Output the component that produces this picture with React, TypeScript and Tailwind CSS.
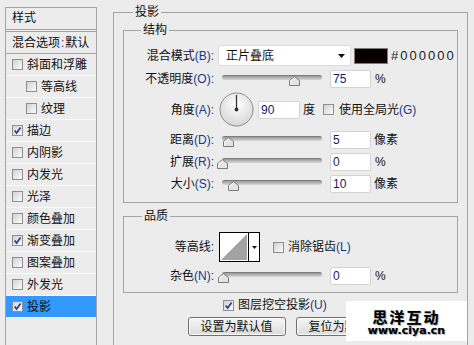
import React from "react";

function Check({ checked }: { checked?: boolean }) {
  return (
    <span className="relative inline-block w-[11px] h-[11px] shrink-0 border border-[#8e8f8f] bg-gradient-to-br from-[#d2d2d2] to-[#fcfcfc]">
      {checked && (
        <svg className="absolute left-0 top-0" width="9" height="9" viewBox="0 0 9 9">
          <path d="M1.6 4.4 L3.6 7 L7.6 1.4" stroke="#2b3f95" strokeWidth="1.7" fill="none" />
        </svg>
      )}
    </span>
  );
}

function Key({ k }: { k: string }) {
  return <span className="text-[#17388a]">({k}):</span>;
}

function Label({ cn, k }: { cn: string; k?: string }) {
  return (
    <div className="w-[90px] shrink-0 text-right whitespace-nowrap">
      {cn}
      {k ? <Key k={k} /> : <span>:</span>}
    </div>
  );
}

function Slider({ pos }: { pos: number }) {
  return (
    <div className="relative ml-[3px] w-[110px] h-[18px] shrink-0">
      <div className="absolute left-[5px] right-[5px] top-[5px] h-[5px] rounded-full border-t border-[#7c7c7c] bg-gradient-to-b from-[#9a9a9a] to-[#d8d8d8]" />
      <svg className="absolute top-[6px]" style={{ left: pos }} width="11" height="10" viewBox="0 0 11 10">
        <path d="M0.5 9.5 V4.5 L5.5 0.6 L10.5 4.5 V9.5 Z" fill="#e4e4e4" stroke="#7a7a7a" />
        <path d="M1.5 8.5 V5 L5.5 1.9" fill="none" stroke="#ffffff" />
      </svg>
    </div>
  );
}

function Input({ v, w = "w-[41px]" }: { v: string; w?: string }) {
  return (
    <div className={`ml-[3px] ${w} h-[18px] shrink-0 bg-white border border-[#d3d3d3] rounded-[2px] pl-[2px] flex items-center text-[#121c6a] leading-none`}>
      {v}
    </div>
  );
}

const items: { t: string; lvl: number; c?: boolean; sel?: boolean }[] = [
  { t: "斜面和浮雕", lvl: 0 },
  { t: "等高线", lvl: 1 },
  { t: "纹理", lvl: 1 },
  { t: "描边", lvl: 0, c: true },
  { t: "内阴影", lvl: 0 },
  { t: "内发光", lvl: 0 },
  { t: "光泽", lvl: 0 },
  { t: "颜色叠加", lvl: 0 },
  { t: "渐变叠加", lvl: 0, c: true },
  { t: "图案叠加", lvl: 0 },
  { t: "外发光", lvl: 0 },
  { t: "投影", lvl: 0, c: true, sel: true },
];

export default function App() {
  return (
    <div className="relative w-[474px] h-[345px] overflow-hidden bg-[#ececec] text-[12px] text-[#111] font-['Liberation_Sans','Noto_Sans_CJK_SC',sans-serif] flex items-start">
      {/* left list */}
      <div className="ml-[5px] mt-[7px] w-[92px] h-[360px] shrink-0 border border-[#a3a3a3] flex flex-col">
        <div className="h-[22px] flex items-center pl-[6px] pb-[2px] border-b border-[#a3a3a3]">样式</div>
        <div className="h-[1px]" />
        <div className="h-[23px] flex items-center pl-[6px] border-t border-b border-[#a3a3a3] whitespace-nowrap">
          混合选项<span className="text-[#17388a] px-[1px]">:</span>默认
        </div>
        {items.map((it) => (
          <div
            key={it.t}
            className={`h-[22px] flex items-center border-b border-[#fafafa] ${it.lvl ? "pl-[20px]" : "pl-[6px]"} ${it.sel ? "bg-[#3399ff]" : ""}`}
          >
            <Check checked={it.c} />
            <span className="ml-[4px]">{it.t}</span>
          </div>
        ))}
      </div>

      {/* right group */}
      <div className="relative ml-[16px] mt-[12px] w-[355px] h-[345px] shrink-0 border border-[#a3a3a3] pt-[17px] px-[9px]">
        <span className="absolute -top-[9px] left-[19px] px-[2px] bg-[#ececec] leading-[16px]">投影</span>

        {/* 结构 */}
        <div className="relative h-[173px] border border-[#a3a3a3] pt-[14px]">
          <span className="absolute -top-[9px] left-[17px] px-[2px] bg-[#ececec] leading-[16px]">结构</span>

          <div className="flex items-center h-[21px]">
            <Label cn="混合模式" k="B" />
            <div className="ml-[4px] w-[133px] h-[21px] shrink-0 bg-white border border-[#dcdcdc] rounded-[2px] flex items-center pl-[7px] pr-[5px] justify-between">
              <span>正片叠底</span>
              <svg width="7" height="4" viewBox="0 0 7 4">
                <polygon points="0,0 7,0 3.5,4" fill="#111" />
              </svg>
            </div>
            <div className="ml-[3px] w-[34px] h-[16px] shrink-0 border border-[#7c7c7c] bg-[#080000]" />
            <span className="ml-[3px] text-[13px] tracking-[2px] text-[#1a1a1a]">#000000</span>
          </div>

          <div className="flex items-center h-[18px] mt-[4px]">
            <Label cn="不透明度" k="O" />
            <Slider pos={72} />
            <Input v="75" />
            <span className="ml-[4px]">%</span>
          </div>

          <div className="flex items-center h-[35px] mt-[4px]">
            <Label cn="角度" k="A" />
            <svg className="ml-[5px] shrink-0" width="35" height="35" viewBox="0 0 35 35">
              <defs>
                <radialGradient id="dial" cx="50%" cy="35%" r="65%">
                  <stop offset="0" stopColor="#ffffff" />
                  <stop offset="1" stopColor="#d6d6d6" />
                </radialGradient>
              </defs>
              <circle cx="17.5" cy="17.5" r="16.5" fill="url(#dial)" stroke="#8c8c8c" />
              <line x1="17.5" y1="17.5" x2="17.5" y2="3" stroke="#333" strokeWidth="1.3" />
              <circle cx="17.5" cy="17.5" r="1.9" fill="#333" />
            </svg>
            <Input v="90" w="w-[42px] ml-[4px]" />
            <span className="ml-[3px]">度</span>
            <span className="ml-[8px] flex items-center">
              <Check />
            </span>
            <span className="ml-[5px] whitespace-nowrap">
              使用全局光<span className="text-[#17388a]">(G)</span>
            </span>
          </div>

          <div className="flex items-center h-[18px] mt-[4px]">
            <Label cn="距离" k="D" />
            <Slider pos={6} />
            <Input v="5" />
            <span className="ml-[3px]">像素</span>
          </div>

          <div className="flex items-center h-[18px] mt-[4px]">
            <Label cn="扩展" k="R" />
            <Slider pos={0} />
            <Input v="0" />
            <span className="ml-[4px]">%</span>
          </div>

          <div className="flex items-center h-[18px] mt-[4px]">
            <Label cn="大小" k="S" />
            <Slider pos={11} />
            <Input v="10" />
            <span className="ml-[3px]">像素</span>
          </div>
        </div>

        {/* 品质 */}
        <div className="relative mt-[13px] h-[77px] border border-[#a3a3a3] pt-[15px]">
          <span className="absolute -top-[9px] left-[18px] px-[2px] bg-[#ececec] leading-[16px]">品质</span>

          <div className="flex items-center h-[30px]">
            <Label cn="等高线" />
            <div className="ml-[5px] w-[41px] h-[30px] shrink-0 border border-black bg-white flex">
              <svg className="shrink-0" width="28" height="28" viewBox="0 0 28 28">
                <polygon points="1,27 27,1 27,27" fill="#a3a3a3" />
              </svg>
              <div className="w-[1px] bg-black" />
              <div className="flex-1 flex items-center justify-center">
                <svg width="5" height="3" viewBox="0 0 5 3">
                  <polygon points="0,0 5,0 2.5,3" fill="#111" />
                </svg>
              </div>
            </div>
            <span className="ml-[13px] flex items-center">
              <Check />
            </span>
            <span className="ml-[4px] whitespace-nowrap">
              消除锯齿<span className="text-[#17388a]">(L)</span>
            </span>
          </div>

          <div className="flex items-center h-[18px] mt-[5px]">
            <Label cn="杂色" k="N" />
            <Slider pos={1} />
            <Input v="0" />
            <span className="ml-[4px]">%</span>
          </div>
        </div>

        <div className="flex items-center h-[16px] mt-[4px] pl-[100px]">
          <Check checked />
          <span className="ml-[4px] whitespace-nowrap">
            图层挖空投影<span className="text-[#17388a]">(U)</span>
          </span>
        </div>

        <div className="flex justify-center gap-[10px] mt-[4px]">
          <div className="w-[98px] h-[19px] border border-[#707070] rounded-[3px] bg-gradient-to-b from-[#f6f6f6] to-[#dcdcdc] flex items-center justify-center shadow-[inset_0_0_0_1px_#fcfcfc]">
            设置为默认值
          </div>
          <div className="w-[98px] h-[19px] border border-[#707070] rounded-[3px] bg-gradient-to-b from-[#f6f6f6] to-[#dcdcdc] flex items-center justify-center shadow-[inset_0_0_0_1px_#fcfcfc]">
            复位为默认值
          </div>
        </div>
      </div>

      {/* watermark */}
      <div className="absolute left-[346px] top-[301px] w-[121px] h-[40px] bg-white flex flex-col items-center">
        <span className="mt-[8px] h-[15px] text-[15px] leading-[15px] font-bold tracking-[2px] text-black font-['Noto_Sans_CJK_SC',sans-serif] [text-shadow:0_0_1px_#777,1px_1px_0_#bbb]">
          思洋互动
        </span>
        <span className="mt-[1px] h-[11px] text-[11px] leading-[11px] font-bold text-black font-['DejaVu_Sans',sans-serif] [text-shadow:0_0_1px_#777,1px_1px_0_#bbb]">
          www.ciya.cn
        </span>
      </div>
    </div>
  );
}
